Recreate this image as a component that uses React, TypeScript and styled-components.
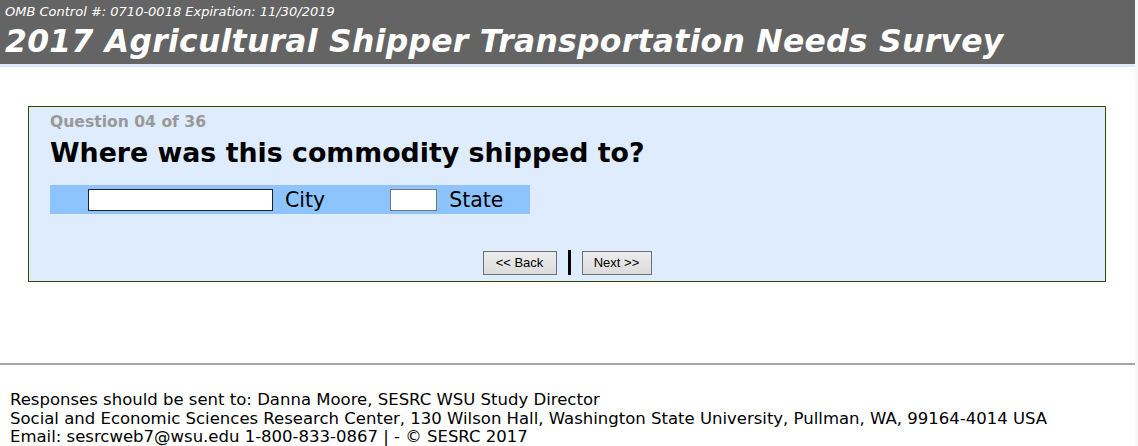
import React, { useState } from 'react'
import styled, { createGlobalStyle } from 'styled-components'

const GlobalStyle = createGlobalStyle`
  html, body {
    margin: 0;
    padding: 0;
    background: #f7f7f7;
  }
  body {
    font-family: 'DejaVu Sans', Verdana, sans-serif;
  }
`

const Page = styled.div`
  width: 1135px;
  min-height: 446px;
  background: #ffffff;
  display: flex;
  flex-direction: column;
`

const Header = styled.header`
  background: #646464;
  height: 60px;
  padding: 4px 0 0 5px;
  border-bottom: 3px solid #dcebfc;
  color: #ffffff;
  overflow: hidden;
`

const Omb = styled.div`
  font-size: 13px;
  font-style: italic;
  line-height: 15px;
`

const Title = styled.h1`
  margin: 3px 0 0;
  font-size: 31.4px;
  font-weight: bold;
  font-style: italic;
  line-height: 38px;
  letter-spacing: 0.3px;
`

const QuestionBox = styled.section`
  margin: 39px 29px 0 28px;
  height: 176px;
  box-sizing: border-box;
  border: 1px solid #2f4b00;
  background: #deecfd;
  padding: 5px 0 0 21px;
  display: flex;
  flex-direction: column;
`

const QuestionNumber = styled.div`
  color: #999999;
  font-size: 15.6px;
  font-weight: bold;
  line-height: 20px;
`

const QuestionText = styled.h2`
  margin: 5px 0 0;
  font-size: 26.8px;
  font-weight: bold;
  line-height: 32px;
  color: #000000;
`

const AnswerRow = styled.div`
  margin-top: 16px;
  width: 480px;
  height: 29px;
  background: #8ec4fd;
  display: flex;
  align-items: center;
  padding-left: 38px;
  box-sizing: border-box;
`

const TextInput = styled.input<{ $w: number; $dark?: boolean }>`
  width: ${p => p.$w}px;
  height: 22px;
  box-sizing: border-box;
  border: 1px solid ${p => (p.$dark ? '#222222' : '#767676')};
  background: #ffffff;
  padding: 0 2px;
  margin: 0;
  font-size: 14px;
  outline: none;
`

const FieldLabel = styled.label<{ $gap: number }>`
  font-size: 20.5px;
  margin: 0 ${p => p.$gap}px 0 12px;
  color: #000000;
  line-height: 29px;
  padding-top: 2px;
`

const NavRow = styled.div`
  margin-top: 36px;
  display: flex;
  justify-content: center;
  align-items: center;
  gap: 11px;
  padding-right: 21px;
`

const NavButton = styled.button<{ $w: number }>`
  width: ${p => p.$w}px;
  height: 24px;
  border: 1px solid #707070;
  background: linear-gradient(#ececec, #dcdcdc);
  font-family: 'Liberation Sans', Arial, sans-serif;
  font-size: 13px;
  color: #000000;
  padding: 0;
  cursor: pointer;
`

const Divider = styled.span`
  width: 3px;
  height: 25px;
  background: #000000;
`

const Rule = styled.hr`
  margin: 81px 0 0;
  border: none;
  border-top: 2px solid #a7a7a7;
  height: 0;
`

const Footer = styled.footer`
  padding: 26px 0 0 10px;
  font-size: 16.5px;
  line-height: 18.5px;
  color: #000000;
`

export default function App() {
  const [city, setCity] = useState('')
  const [state, setState] = useState('')
  return (
    <>
      <GlobalStyle />
      <Page>
        <Header>
          <Omb>OMB Control #: 0710-0018 Expiration: 11/30/2019</Omb>
          <Title>2017 Agricultural Shipper Transportation Needs Survey</Title>
        </Header>
        <QuestionBox>
          <QuestionNumber>Question 04 of 36</QuestionNumber>
          <QuestionText>Where was this commodity shipped to?</QuestionText>
          <AnswerRow>
            <TextInput $w={185} $dark value={city} onChange={e => setCity(e.target.value)} />
            <FieldLabel $gap={65}>City</FieldLabel>
            <TextInput $w={47} value={state} onChange={e => setState(e.target.value)} />
            <FieldLabel $gap={0}>State</FieldLabel>
          </AnswerRow>
          <NavRow>
            <NavButton $w={74}>&lt;&lt; Back</NavButton>
            <Divider />
            <NavButton $w={70}>Next &gt;&gt;</NavButton>
          </NavRow>
        </QuestionBox>
        <Rule />
        <Footer>
          <div>Responses should be sent to: Danna Moore, SESRC WSU Study Director</div>
          <div>Social and Economic Sciences Research Center, 130 Wilson Hall, Washington State University, Pullman, WA, 99164-4014 USA</div>
          <div>Email: sesrcweb7@wsu.edu 1-800-833-0867 | - © SESRC 2017</div>
        </Footer>
      </Page>
    </>
  )
}
